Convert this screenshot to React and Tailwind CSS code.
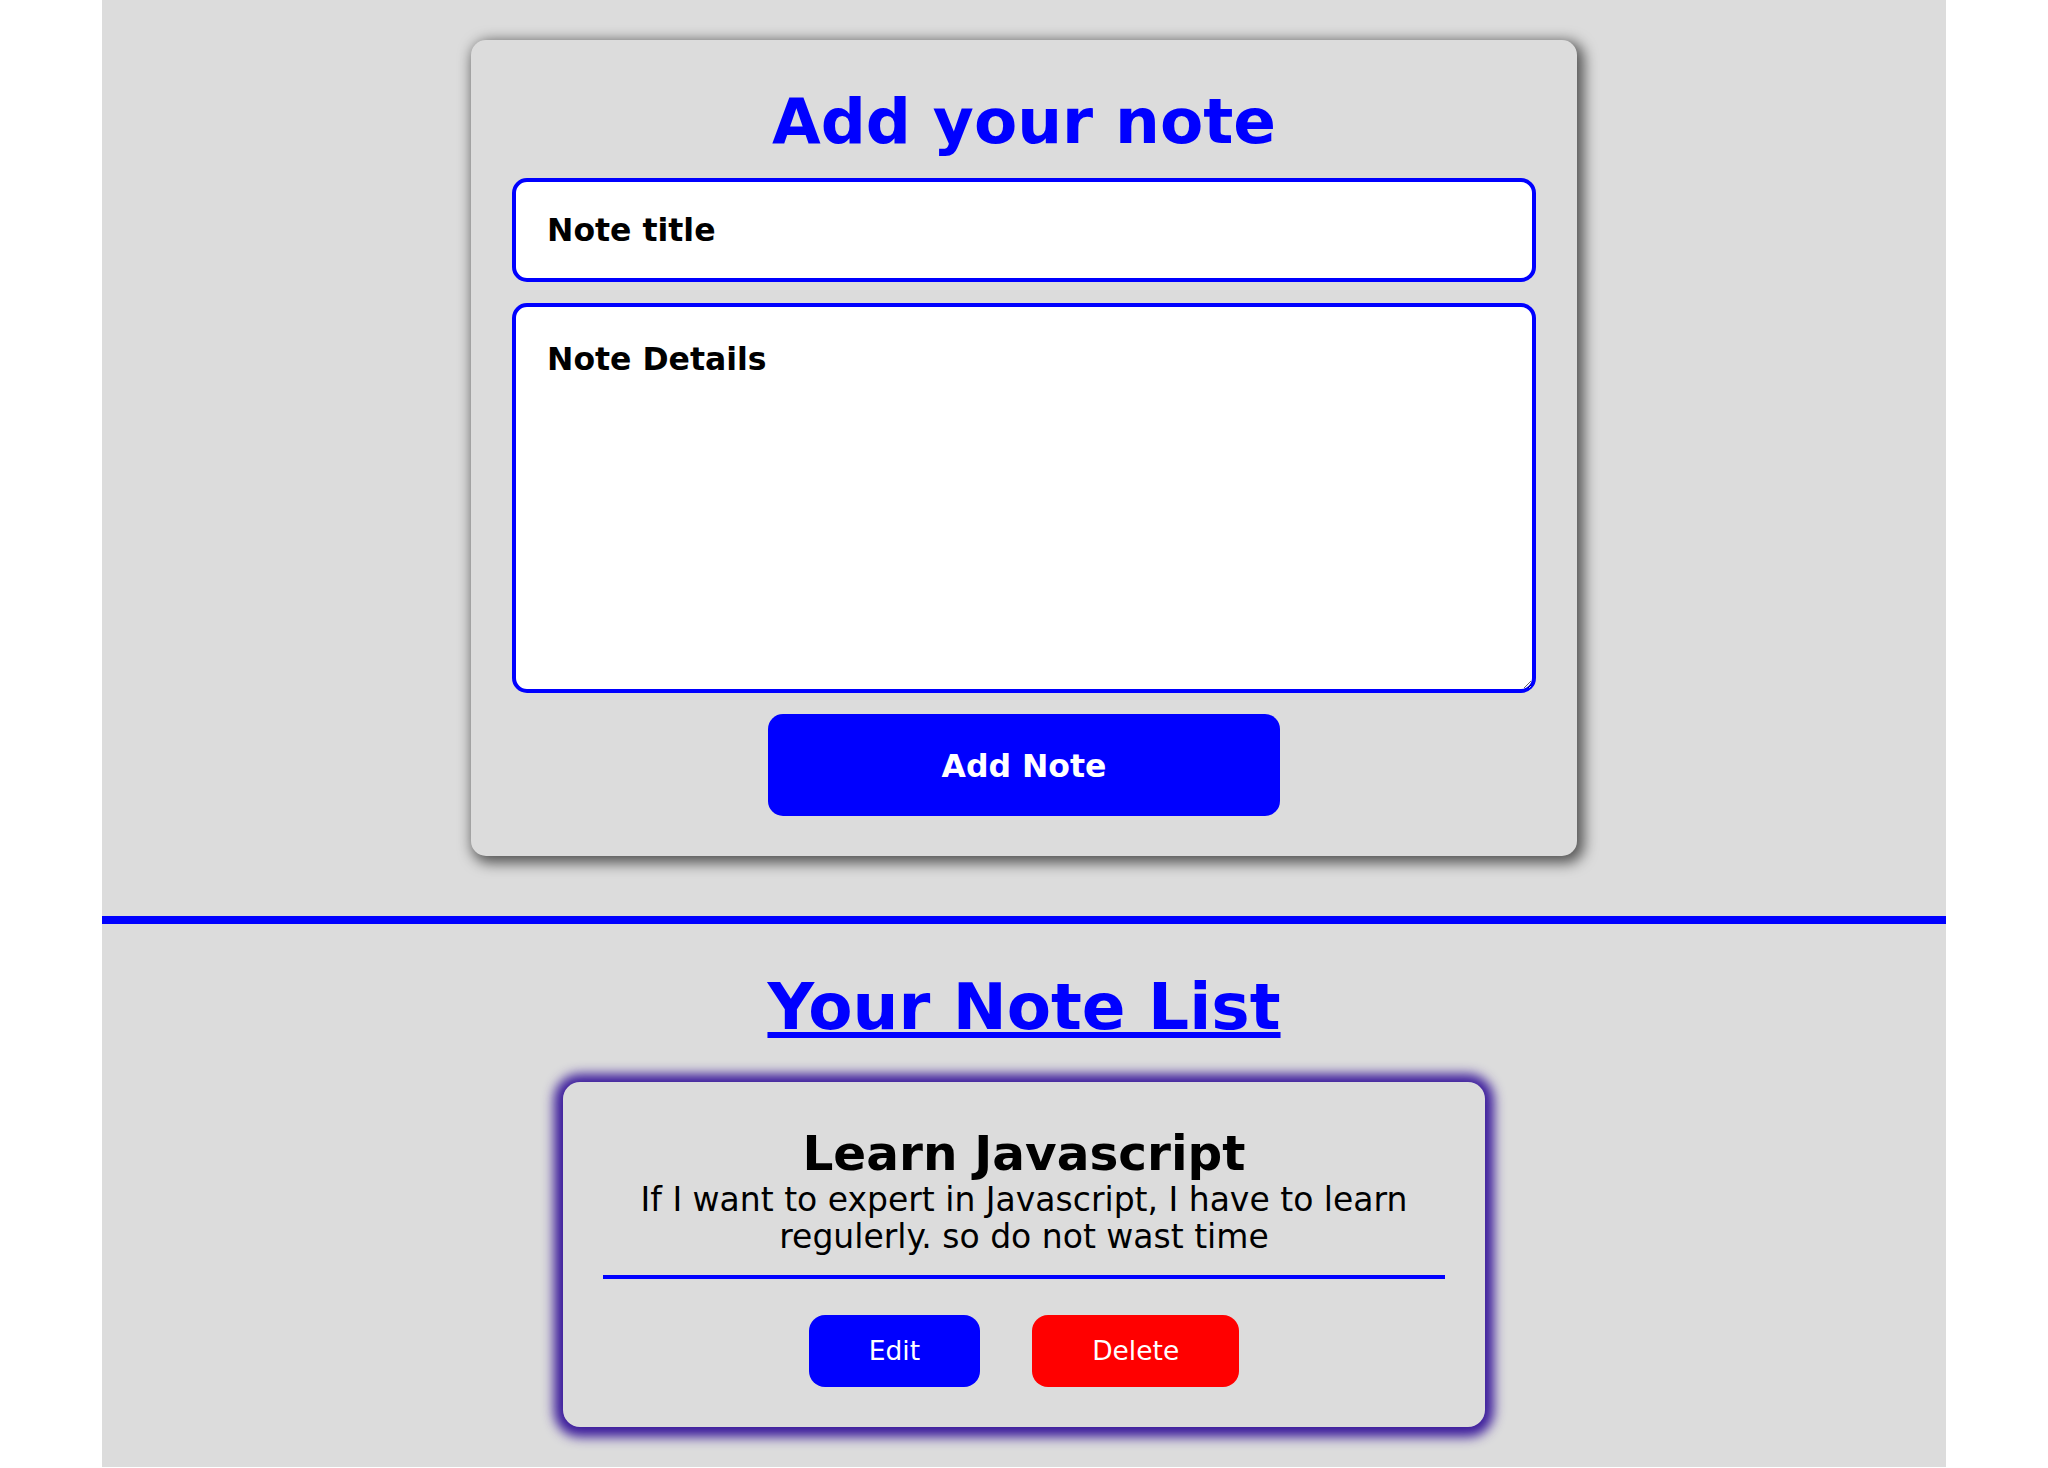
export default function App() {
  return (
    <div className="min-h-screen bg-white font-['DejaVu_Sans',Verdana,sans-serif]">
      <div className="w-[90%] mx-auto bg-[#dcdcdc] pt-[40px] pb-[40px]">
        {/* add note form */}
        <form className="w-[60%] mx-auto bg-[#dcdcdc] rounded-[15px] shadow-[4px_4px_14px_3px_rgba(0,0,0,0.62)] px-[41px] pt-[44px] pb-[40px] flex flex-col items-center">
          <h1 className="text-[63px] leading-[75px] font-bold text-[#0000ff] mb-[19px]">Add your note</h1>
          <input
            type="text"
            placeholder="Note title"
            className="w-full h-[104px] border-4 border-[#0000ff] rounded-[15px] bg-white px-[31px] text-[31.5px] font-bold text-black placeholder:text-black outline-none"
          />
          <textarea
            placeholder="Note Details"
            className="w-full h-[390px] mt-[21px] border-4 border-[#0000ff] rounded-[15px] bg-white px-[31px] pt-[34px] text-[31.5px] leading-[36px] font-bold text-black placeholder:text-black outline-none"
          />
          <button
            type="button"
            className="w-1/2 h-[102px] mt-[21px] pt-[3px] bg-[#0000ff] rounded-[15px] text-white text-[31.5px] font-bold"
          >
            Add Note
          </button>
        </form>

        <hr className="mt-[60px] h-[8px] border-0 bg-[#0000ff]" />

        <h2 className="mt-[45px] text-center text-[64.5px] leading-[75px] font-bold text-[#0000ff] underline decoration-[6px] underline-offset-[3px]">
          Your Note List
        </h2>

        {/* note card */}
        <div className="w-1/2 mx-auto mt-[38px] bg-[#dcdcdc] rounded-[17px] shadow-[0_1px_12px_9px_#3c1c9c] px-[40px] pt-[43px] pb-[40px] text-center text-black">
          <h3 className="text-[48.5px] leading-[56px] font-bold">Learn Javascript</h3>
          <p className="text-[33px] leading-[37px]">If I want to expert in Javascript, I have to learn regulerly. so do not wast time</p>
          <div className="mt-[20px] h-[4px] bg-[#0000ff]" />
          <div className="mt-[36px] flex justify-center gap-[52px]">
            <button type="button" className="h-[72px] px-[60px] rounded-[16px] bg-[#0000ff] text-white text-[26.5px]">Edit</button>
            <button type="button" className="h-[72px] px-[60px] rounded-[16px] bg-[#ff0000] text-white text-[26.5px]">Delete</button>
          </div>
        </div>
      </div>
    </div>
  )
}
